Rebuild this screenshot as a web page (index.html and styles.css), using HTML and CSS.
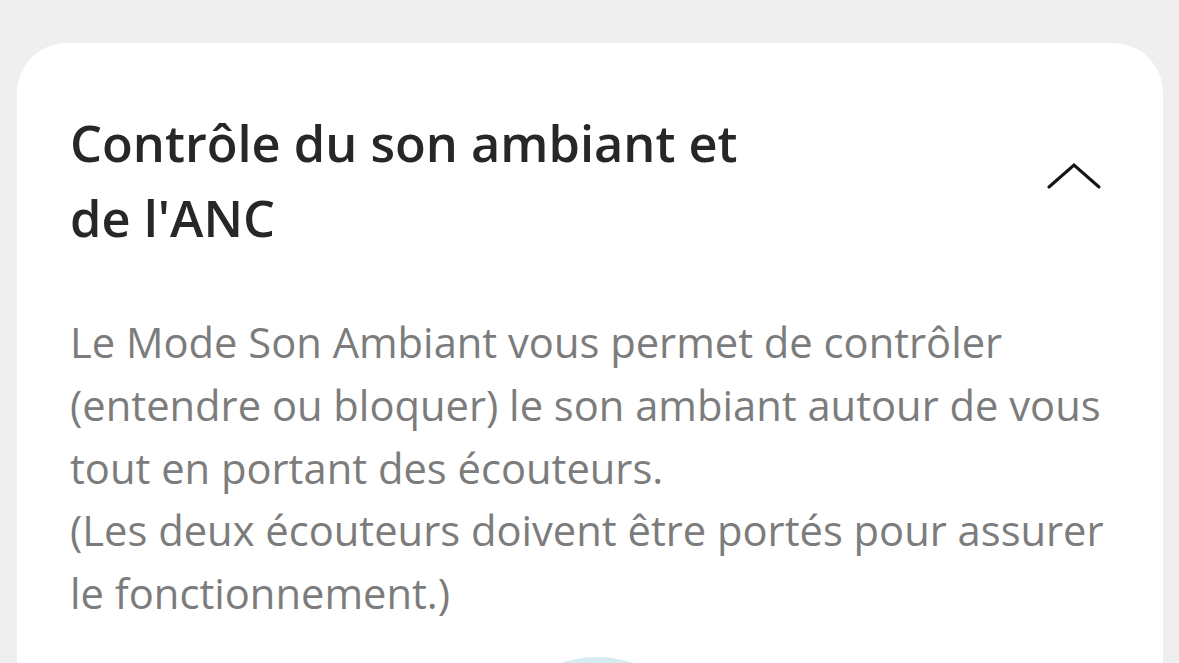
FILE: index.html
```html
<!DOCTYPE html>
<html lang="fr">
<head>
<meta charset="utf-8">
<link rel="stylesheet" href="styles.css">
</head>
<body>
<div class="page">
  <section class="card">
    <header class="card-head">
      <h1 class="title">Contrôle du son ambiant et<br>de l'ANC</h1>
      <svg class="chevron" width="54" height="26" viewBox="0 0 54 26" aria-hidden="true">
        <path d="M2 24 L27 2 L52 24" fill="none" stroke="#141414" stroke-width="3" stroke-linecap="round" stroke-linejoin="miter"/>
      </svg>
    </header>
    <p class="desc">Le Mode Son Ambiant vous permet de contrôler (entendre ou bloquer) le son ambiant autour de vous tout en portant des écouteurs.<br>(Les deux écouteurs doivent être portés pour assurer le fonctionnement.)</p>
    <div class="dial"><div class="dot"></div></div>
  </section>
</div>
</body>
</html>
```

FILE: styles.css
```css
html, body {
  margin: 0;
  padding: 0;
  background: #efefef;
}
.page {
  height: 663px;
  overflow: hidden;
  padding: 43px 16px 0 17px;
  box-sizing: border-box;
}
.card {
  background: #fff;
  border-radius: 50px 50px 0 0;
  padding: 62px 40px 0 53px;
  min-height: 800px;
  box-sizing: border-box;
}
.card-head {
  display: flex;
  align-items: flex-start;
  justify-content: space-between;
}
.title {
  margin: 0;
  font-family: "Open Sans", "Noto Sans", sans-serif;
  font-weight: 600;
  font-size: 50.5px;
  line-height: 75px;
  color: #272727;
}
.chevron {
  margin-top: 58px;
  margin-right: 22px;
  flex: none;
}
.desc {
  margin: 56px 0 0;
  font-family: "Open Sans", "Noto Sans", sans-serif;
  font-size: 41.7px;
  line-height: 62.8px;
  color: #7c7c7c;
}
.dial {
  display: flex;
  justify-content: center;
  margin-top: 32px;
}
.dot {
  width: 222px;
  height: 222px;
  border-radius: 50%;
  background: #d3ebf1;
}
```
